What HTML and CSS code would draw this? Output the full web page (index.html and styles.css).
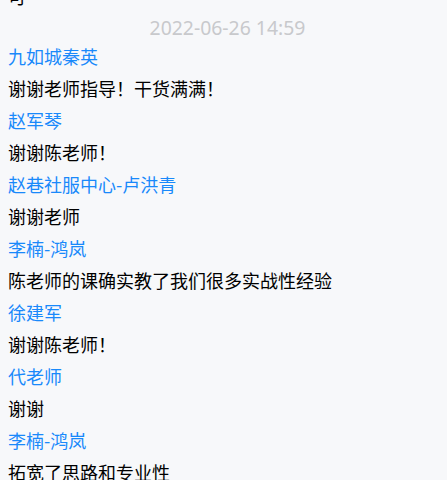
FILE: index.html
```html
<!DOCTYPE html>
<html lang="zh-CN">
<head>
<meta charset="utf-8">
<title>评论</title>
<link rel="stylesheet" href="styles.css">
</head>
<body>
<div class="chat">
  <div class="list">
    <div class="msg msg-prev">可</div>
    <div class="time">2022-06-26 14:59</div>
    <div class="item"><div class="name">九如城秦英</div><div class="msg">谢谢老师指导！干货满满！</div></div>
    <div class="item"><div class="name">赵军琴</div><div class="msg">谢谢陈老师！</div></div>
    <div class="item"><div class="name">赵巷社服中心-卢洪青</div><div class="msg">谢谢老师</div></div>
    <div class="item"><div class="name">李楠-鸿岚</div><div class="msg">陈老师的课确实教了我们很多实战性经验</div></div>
    <div class="item"><div class="name">徐建军</div><div class="msg">谢谢陈老师！</div></div>
    <div class="item"><div class="name">代老师</div><div class="msg">谢谢</div></div>
    <div class="item"><div class="name">李楠-鸿岚</div><div class="msg">拓宽了思路和专业性</div></div>
  </div>
</div>
</body>
</html>
```

FILE: styles.css
```css
html, body {
  margin: 0;
  padding: 0;
  background: #ffffff;
}
.chat {
  height: 480px;
  overflow: hidden;
  background: #f7f8fa;
  font-family: "Noto Sans CJK SC", "Noto Sans", sans-serif;
}
.list {
  display: flex;
  flex-direction: column;
  padding: 0 8px;
  margin-top: -20px;
}
.msg-prev {
  color: #000;
}
.time {
  text-align: center;
  color: #c8c9cc;
  font-family: "Noto Sans", "Noto Sans CJK SC", sans-serif;
  font-size: 19.4px;
  line-height: 32px;
  margin-bottom: -4px;
  padding-left: 8px;
}
.name {
  color: #1989fa;
  font-size: 18px;
  line-height: 32px;
}
.msg {
  color: #000;
  font-size: 18px;
  line-height: 32px;
}
```
